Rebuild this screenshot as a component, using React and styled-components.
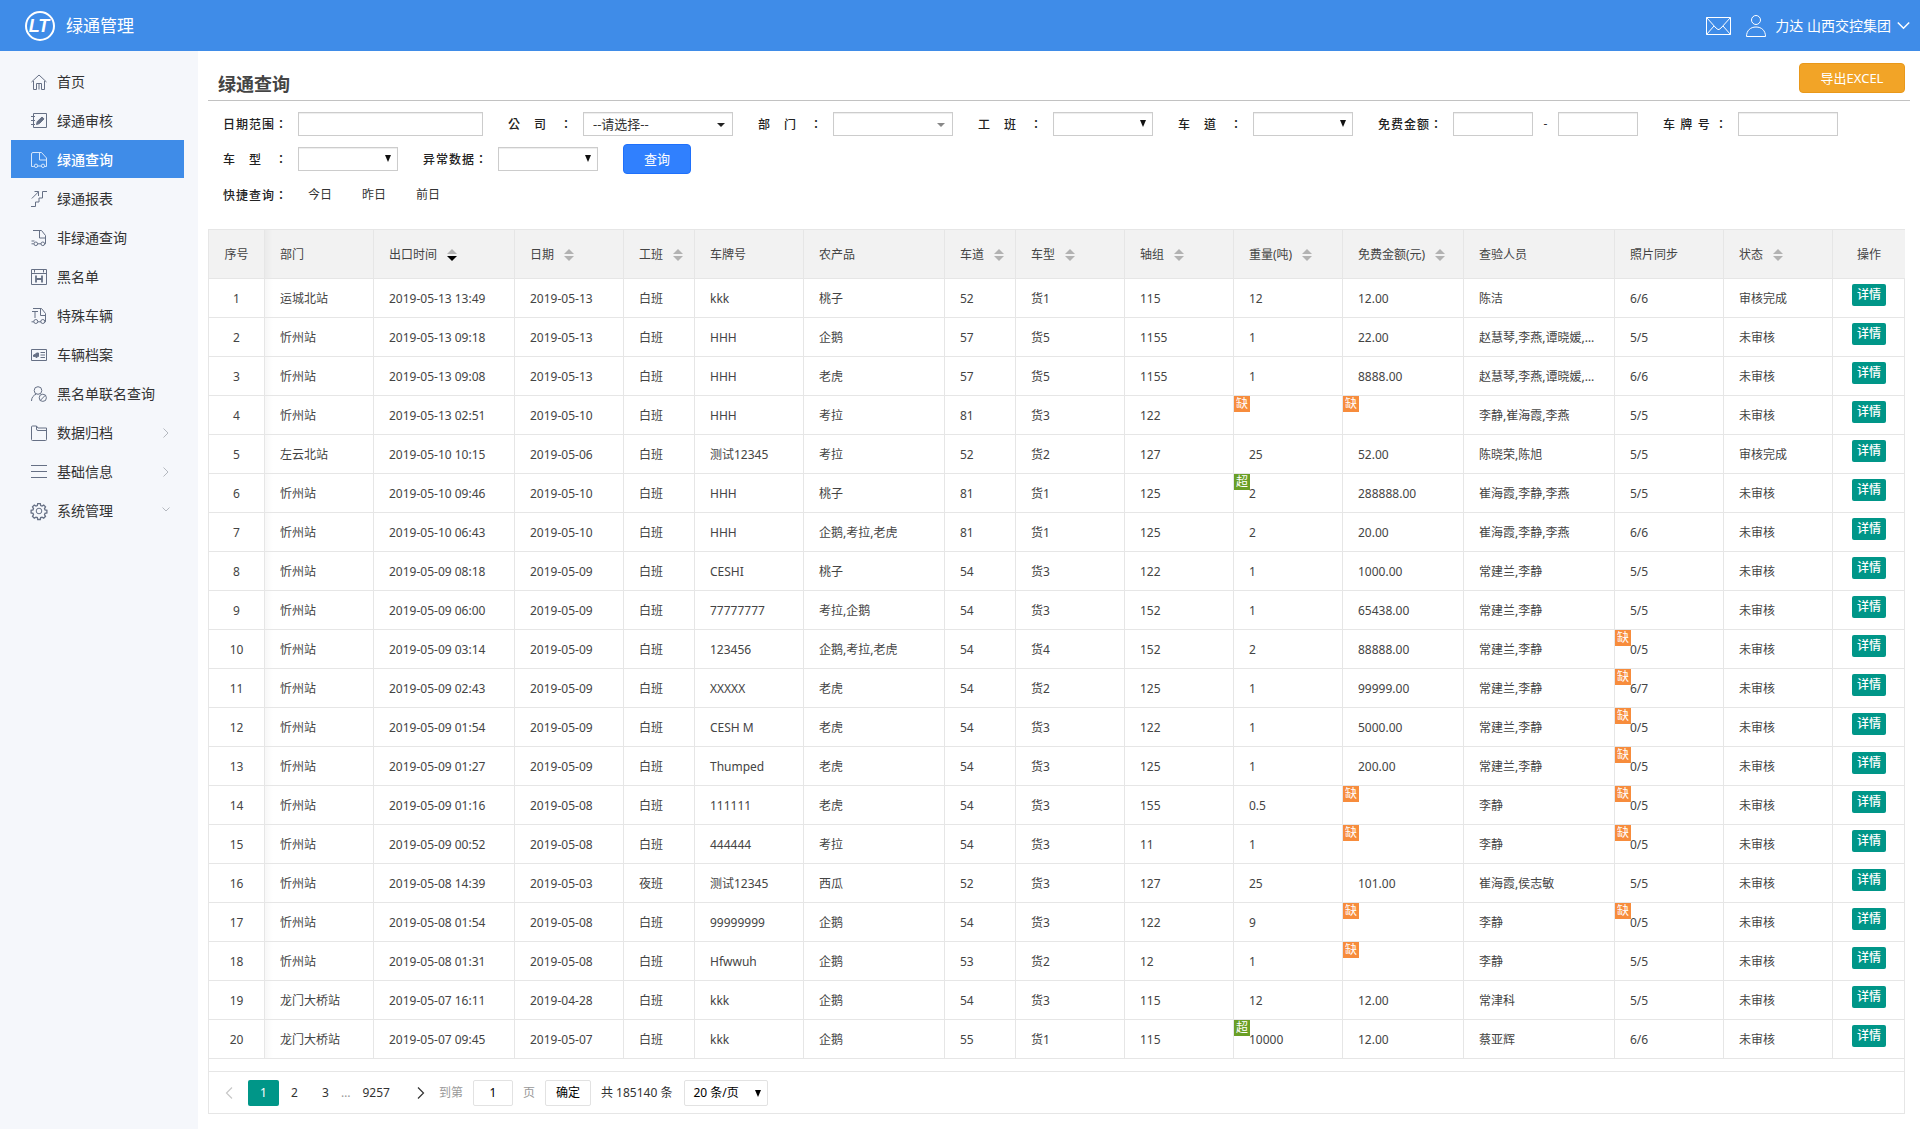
import React, { useState } from 'react';
import styled, { createGlobalStyle, css } from 'styled-components';

const GlobalStyle = createGlobalStyle`
  * {
    box-sizing: border-box;
  }

  body {
    margin: 0;
    background: #fff;
    color: #333;
    font-family: 'Noto Sans', 'Noto Sans CJK SC', sans-serif;
    font-size: 12px;
    line-height: 24px;
  }

  button,
  input,
  select {
    font: inherit;
    color: inherit;
  }
`;

const Page = styled.div`
  display: flex;
  flex-direction: column;
  min-height: 100vh;
`;

const Header = styled.header`
  display: flex;
  align-items: center;
  justify-content: space-between;
  height: 51px;
  padding: 0 10px 0 24px;
  background: #3f8ce8;
  color: #fff;
`;

const Brand = styled.div`
  display: flex;
  align-items: center;
  gap: 10px;
  font-size: 17px;
`;

const UserArea = styled.div`
  display: flex;
  align-items: center;
  font-size: 14px;
`;

const IconButton = styled.button`
  display: flex;
  padding: 0;
  margin-right: 15px;
  border: none;
  background: transparent;
  cursor: pointer;
`;

const UserMenu = styled.button`
  display: flex;
  align-items: center;
  gap: 6px;
  padding: 0;
  border: none;
  background: transparent;
  cursor: pointer;

  svg:first-child {
    margin-right: 3px;
  }
`;

const Body = styled.div`
  display: flex;
  flex: 1;
`;

const Sidebar = styled.nav`
  flex: 0 0 198px;
  padding: 11px 14px 0 11px;
  background: #f5f7fb;
`;

const MenuItem = styled.a`
  display: flex;
  align-items: center;
  height: 38px;
  margin-bottom: 1px;
  padding: 2px 14px 0 20px;
  font-size: 14px;
  color: #333;
  text-decoration: none;

  > svg {
    margin-right: 10px;
    color: #667085;
  }

  ${({ $active }) =>
    $active &&
    css`
      background: #3f8ce8;
      color: #fff;
      font-weight: 500;

      > svg {
        color: #d5e6fb;
      }
    `}
`;

const MenuArrow = styled.span`
  display: flex;
  margin-left: auto;
  color: #b4b8bf;
`;

const Main = styled.main`
  flex: 1;
  min-width: 0;
  padding: 0 10px 0 10px;
`;

const TitleBar = styled.div`
  display: flex;
  align-items: center;
  justify-content: space-between;
  height: 50px;
  padding: 16px 5px 0 10px;
  border-bottom: 1px solid #c2c2c2;
`;

const Title = styled.h1`
  margin: 0;
  font-size: 18px;
  font-weight: bold;
  color: #444;
`;

const ExportButton = styled.button`
  width: 106px;
  height: 30px;
  margin-bottom: 12px;
  padding: 0;
  border: 1px solid #e9981a;
  border-radius: 4px;
  background: #f2a427;
  color: #fff;
  font-size: 13px;
  cursor: pointer;
`;

const Filters = styled.form`
  display: flex;
  flex-direction: column;
  gap: 1px;
  padding: 6px 0 0 15px;
`;

const FilterRow = styled.div`
  display: flex;
  flex-wrap: wrap;
  align-items: center;
  column-gap: 25px;
  min-height: 34px;

  &:last-child {
    min-height: 36px;
  }
`;

const Field = styled.div`
  display: flex;
  align-items: center;
`;

const FieldLabel = styled.label`
  width: 64px;
  margin-right: 11px;
  font-family: 'Noto Sans CJK TC', 'Noto Sans CJK SC', sans-serif;
  font-weight: 500;
  color: #222;
  text-align: justify;
  text-align-last: justify;
`;

const control = css`
  width: ${({ $width }) => $width}px;
  height: 24px;
  border: 1px solid #ccc;
  border-radius: 0;
  background: #fff;
  box-shadow: inset 0 1px 1px rgba(0, 0, 0, 0.075);
`;

const TextInput = styled.input`
  ${control}
  padding: 0 8px;
`;

const SelectWrap = styled.span`
  position: relative;
  display: flex;
`;

const Select = styled.select`
  ${control}
  padding: 0 9px;
  appearance: none;
  font-size: 13px;
  line-height: 20px;
`;

const SelectArrow = styled.svg`
  position: absolute;
  right: ${({ $flat }) => ($flat ? 8 : 7)}px;
  top: ${({ $flat }) => ($flat ? 11 : 8)}px;
  pointer-events: none;
`;

const Dash = styled.span`
  width: 25px;
  text-align: center;
`;

const SearchButton = styled.button`
  width: 68px;
  height: 30px;
  padding: 0;
  border: 1px solid #1f70fb;
  border-radius: 4px;
  background: #3080fe;
  color: #fff;
  font-size: 13px;
  cursor: pointer;
`;

const QuickLabel = styled(FieldLabel).attrs({ as: 'span' })`
  margin-right: 21px;
`;

const QuickLinks = styled.div`
  display: flex;
  gap: 30px;
`;

const QuickLink = styled.a`
  color: #333;
  text-decoration: none;
`;

const TableBox = styled.section`
  margin: 16px 5px 0 0;
  border: 1px solid #e6e6e6;
`;

const Table = styled.table`
  width: 100%;
  table-layout: fixed;
  border-collapse: separate;
  border-spacing: 0;
  color: #444;
`;

const cell = css`
  padding: 2px 15px 0;
  border-right: 1px solid #e6e6e6;
  border-bottom: 1px solid #e6e6e6;
  overflow: hidden;
  text-align: left;
  white-space: nowrap;

  &:first-child,
  &:last-child {
    padding-left: 0;
    padding-right: 0;
    text-align: center;
  }

  &:last-child {
    border-right: none;
  }

  &:nth-child(2) {
    background-image: linear-gradient(to right, rgba(0, 0, 0, 0.03), transparent 8px);
  }
`;

const HeadCell = styled.th`
  ${cell}
  height: 49px;
  background-color: #f2f2f2;
  font-weight: normal;
`;

const Cell = styled.td`
  ${cell}
  position: relative;
  height: 39px;
  text-overflow: ellipsis;

  &:last-child {
    padding-top: 5px;
    vertical-align: top;
  }
`;

const SortButton = styled.button`
  display: inline-flex;
  align-items: center;
  gap: 10px;
  padding: 0;
  border: none;
  background: transparent;
  vertical-align: middle;
  cursor: pointer;
`;

const Badge = styled.span`
  position: absolute;
  top: 0;
  left: 0;
  width: 16px;
  height: 16px;
  background: ${({ $over }) => ($over ? '#6a9f26' : '#f78c3c')};
  color: #fff;
  line-height: 16px;
  text-align: center;
`;

const DetailButton = styled.button`
  width: 34px;
  height: 22px;
  padding: 0;
  border: none;
  border-radius: 2px;
  background: #009688;
  color: #fff;
  font-weight: 500;
  line-height: 22px;
  vertical-align: top;
  cursor: pointer;
`;

const Pagination = styled.div`
  display: flex;
  align-items: center;
  height: 42px;
  margin-top: 12px;
  padding-left: 4px;
  border-top: 1px solid #e6e6e6;
`;

const PageLink = styled.button`
  display: flex;
  align-items: center;
  justify-content: center;
  min-width: 31px;
  height: 26px;
  padding: 0 12px;
  border: none;
  border-radius: 2px;
  background: ${({ $current }) => ($current ? '#009688' : 'transparent')};
  color: ${({ $current }) => ($current ? '#fff' : '#333')};
  cursor: pointer;

  &:disabled {
    color: #c8c8c8;
  }
`;

const StepLink = styled(PageLink)`
  padding: 0 15px 0 12px;
`;

const NextLink = styled(PageLink)`
  padding: 0 14px 0 15px;
`;

const Muted = styled.span`
  color: #999;
`;

const SkipLabel = styled.label`
  display: flex;
  align-items: center;
  gap: 10px;
  color: #999;
`;

const PageInput = styled.input`
  width: 40px;
  height: 26px;
  padding: 0;
  border: 1px solid #e2e2e2;
  border-radius: 2px;
  color: #000;
  text-align: center;
`;

const ConfirmButton = styled.button`
  width: 46px;
  height: 26px;
  margin: 0 10px;
  padding: 0;
  border: 1px solid #e2e2e2;
  border-radius: 2px;
  background: #fff;
  color: #000;
  cursor: pointer;
`;

const PageSize = styled(SelectWrap)`
  margin-left: 12px;

  svg {
    top: 10px;
  }
`;

const PageSizeSelect = styled.select`
  width: 84px;
  height: 26px;
  padding: 0 8px;
  border: 1px solid #e2e2e2;
  border-radius: 2px;
  background: #fff;
  color: #000;
  appearance: none;
`;

const icons = {
  home: <path d="M.5 8 8 1l7.500 7M2.500 7v8.500h3v-6h5v6h3V7M8 10v5.500" />,
  audit: (
    <>
      <path d="M2.500.5h13v14h-13zM0 3.500h4M0 7.500h4M0 11.500h4" />
      <path d="m5.500 11.500.8-3L11 4l2 1.900-4.600 4.700z" fill="currentColor" />
    </>
  ),
  query: (
    <>
      <path d="M2.800 14.500H.5V2q0-1.500 1.500-1.500h8.500l5 5.500v8.500h-1.700M8.500.5V8h7M6.800 14h3.400" />
      <circle cx="5" cy="13.800" r="1.700" />
      <circle cx="12" cy="13.800" r="1.700" />
    </>
  ),
  report: <path d="M0 15.500h4.500v-4.500H8V7h3.500V.5H16M.8 7.500 7.500.8M3.500.5h4V5" />,
  other: (
    <>
      <path d="M2 .5h8.500l4 5v8.300h-1M8.500.5V8h6M.5 11h3M.5 13.800h2.300M6.800 13.800h3.200" />
      <circle cx="4.800" cy="13.800" r="1.800" />
      <circle cx="11.800" cy="13.800" r="1.800" />
    </>
  ),
  black: (
    <>
      <path d="M.5.5h15v15H.5zM.5 4.500h15M3.500.5v3M12.500.5v3" />
      <path d="M5 6.500v7M11 6.500v7M5 10h6" strokeWidth="1.800" />
    </>
  ),
  special: (
    <>
      <path d="M2 .5h8.500l4 5v8.300h-1M9.500.5v7h5M1 3.500h6M4 3.500V10M.5 13.800h2.300M6.800 13.800h3.200" />
      <circle cx="4.800" cy="13.500" r="2" />
      <circle cx="11.800" cy="13.500" r="2" />
    </>
  ),
  archive: (
    <>
      <path d="M.5 2.500h15v11H.5zM9.500 5.500H14M9.500 8H14M9.500 10.500H14" />
      <path d="M2.500 8 4 7.500 5.500 6h2v3.500H6.500L5.500 11l-1-1.500h-2z" fill="currentColor" />
    </>
  ),
  joint: (
    <>
      <circle cx="7" cy="4.500" r="3.800" />
      <path d="M.5 15c0-3.500 2-5.800 4.700-6.800" />
      <circle cx="11.800" cy="11.800" r="3.600" />
      <path d="m9.400 14.300 4.900-5" />
    </>
  ),
  folder: <path d="M.5 2q0-1 1-1h4l1.500 2h8.500v11.500q0 1-1 1h-13q-1 0-1-1zM5.500 1v3q0 1.500 1.500 1.500h8.500" />,
  list: <path d="M0 1.500h16M0 7.500h16M0 13.500h16" />,
  gear: (
    <>
      <circle cx="8" cy="8" r="2.800" />
      <path
        d="M6.700.7h2.600l.4 1.900 1.300.5 1.700-1 1.800 1.800-1 1.700.5 1.300 1.900.4v2.600l-1.900.4-.5 1.300 1 1.700-1.800 1.800-1.700-1-1.300.5-.4 1.900H6.700l-.4-1.900-1.300-.5-1.700 1-1.800-1.800 1-1.700L2 10.300l-1.900-.4V7.300L2 6.900l.5-1.300-1-1.700 1.800-1.800 1.700 1 1.300-.5z"
        strokeWidth="1.300"
      />
    </>
  ),
};

const MenuIcon = ({ name }) => (
  <svg width="16" height="16" viewBox="0 0 16 16" fill="none" stroke="currentColor" overflow="visible">
    {icons[name]}
  </svg>
);

const Chevron = ({ d, width = 8, height = 10, strokeWidth = 1 }) => (
  <svg width={width} height={height} fill="none" stroke="currentColor" strokeWidth={strokeWidth}>
    <path d={d} />
  </svg>
);

const menu = [
  { icon: 'home', text: '首页' },
  { icon: 'audit', text: '绿通审核' },
  { icon: 'query', text: '绿通查询', active: true },
  { icon: 'report', text: '绿通报表' },
  { icon: 'other', text: '非绿通查询' },
  { icon: 'black', text: '黑名单' },
  { icon: 'special', text: '特殊车辆' },
  { icon: 'archive', text: '车辆档案' },
  { icon: 'joint', text: '黑名单联名查询' },
  { icon: 'folder', text: '数据归档', arrow: 'M1.500.5 6 5 1.500 9.500' },
  { icon: 'list', text: '基础信息', arrow: 'M1.500.5 6 5 1.500 9.500' },
  { icon: 'gear', text: '系统管理', arrow: 'M.5 1.500 4 5l3.500-3.500' },
];

const columns = [
  { title: '序号', width: 56 },
  { title: '部门', width: 109 },
  { title: '出口时间', width: 141, sort: 'desc' },
  { title: '日期', width: 109, sort: 'none' },
  { title: '工班', width: 71, sort: 'none' },
  { title: '车牌号', width: 109 },
  { title: '农产品', width: 141 },
  { title: '车道', width: 71, sort: 'none' },
  { title: '车型', width: 109, sort: 'none' },
  { title: '轴组', width: 109, sort: 'none' },
  { title: '重量(吨)', width: 109, sort: 'none' },
  { title: '免费金额(元)', width: 121, sort: 'none' },
  { title: '查验人员', width: 151 },
  { title: '照片同步', width: 109 },
  { title: '状态', width: 109, sort: 'none' },
  { title: '操作', width: 72 },
];

// a leading "缺" or "超" in a value is shown as a corner badge
const rows = [
  ['运城北站', '2019-05-13 13:49', '2019-05-13', '白班', 'kkk', '桃子', '52', '货1', '115', '12', '12.00', '陈洁', '6/6', '审核完成'],
  ['忻州站', '2019-05-13 09:18', '2019-05-13', '白班', 'HHH', '企鹅', '57', '货5', '1155', '1', '22.00', '赵慧琴,李燕,谭晓媛,李静', '5/5', '未审核'],
  ['忻州站', '2019-05-13 09:08', '2019-05-13', '白班', 'HHH', '老虎', '57', '货5', '1155', '1', '8888.00', '赵慧琴,李燕,谭晓媛,李静', '6/6', '未审核'],
  ['忻州站', '2019-05-13 02:51', '2019-05-10', '白班', 'HHH', '考拉', '81', '货3', '122', '缺', '缺', '李静,崔海霞,李燕', '5/5', '未审核'],
  ['左云北站', '2019-05-10 10:15', '2019-05-06', '白班', '测试12345', '考拉', '52', '货2', '127', '25', '52.00', '陈晓荣,陈旭', '5/5', '审核完成'],
  ['忻州站', '2019-05-10 09:46', '2019-05-10', '白班', 'HHH', '桃子', '81', '货1', '125', '超2', '288888.00', '崔海霞,李静,李燕', '5/5', '未审核'],
  ['忻州站', '2019-05-10 06:43', '2019-05-10', '白班', 'HHH', '企鹅,考拉,老虎', '81', '货1', '125', '2', '20.00', '崔海霞,李静,李燕', '6/6', '未审核'],
  ['忻州站', '2019-05-09 08:18', '2019-05-09', '白班', 'CESHI', '桃子', '54', '货3', '122', '1', '1000.00', '常建兰,李静', '5/5', '未审核'],
  ['忻州站', '2019-05-09 06:00', '2019-05-09', '白班', '77777777', '考拉,企鹅', '54', '货3', '152', '1', '65438.00', '常建兰,李静', '5/5', '未审核'],
  ['忻州站', '2019-05-09 03:14', '2019-05-09', '白班', '123456', '企鹅,考拉,老虎', '54', '货4', '152', '2', '88888.00', '常建兰,李静', '缺0/5', '未审核'],
  ['忻州站', '2019-05-09 02:43', '2019-05-09', '白班', 'XXXXX', '老虎', '54', '货2', '125', '1', '99999.00', '常建兰,李静', '缺6/7', '未审核'],
  ['忻州站', '2019-05-09 01:54', '2019-05-09', '白班', 'CESH M', '老虎', '54', '货3', '122', '1', '5000.00', '常建兰,李静', '缺0/5', '未审核'],
  ['忻州站', '2019-05-09 01:27', '2019-05-09', '白班', 'Thumped', '老虎', '54', '货3', '125', '1', '200.00', '常建兰,李静', '缺0/5', '未审核'],
  ['忻州站', '2019-05-09 01:16', '2019-05-08', '白班', '111111', '老虎', '54', '货3', '155', '0.5', '缺', '李静', '缺0/5', '未审核'],
  ['忻州站', '2019-05-09 00:52', '2019-05-08', '白班', '444444', '考拉', '54', '货3', '11', '1', '缺', '李静', '缺0/5', '未审核'],
  ['忻州站', '2019-05-08 14:39', '2019-05-03', '夜班', '测试12345', '西瓜', '52', '货3', '127', '25', '101.00', '崔海霞,侯志敏', '5/5', '未审核'],
  ['忻州站', '2019-05-08 01:54', '2019-05-08', '白班', '99999999', '企鹅', '54', '货3', '122', '9', '缺', '李静', '缺0/5', '未审核'],
  ['忻州站', '2019-05-08 01:31', '2019-05-08', '白班', 'Hfwwuh', '企鹅', '53', '货2', '12', '1', '缺', '李静', '5/5', '未审核'],
  ['龙门大桥站', '2019-05-07 16:11', '2019-04-28', '白班', 'kkk', '企鹅', '54', '货3', '115', '12', '12.00', '常津科', '5/5', '未审核'],
  ['龙门大桥站', '2019-05-07 09:45', '2019-05-07', '白班', 'kkk', '企鹅', '55', '货1', '115', '超10000', '12.00', '蔡亚辉', '6/6', '未审核'],
];

const SortMark = ({ sort }) => (
  <svg width="10" height="12">
    <path d="M5 0l5 5H0z" fill="#b2b2b2" />
    <path d="M0 7h10l-5 5z" fill={sort === 'desc' ? '#000' : '#b2b2b2'} />
  </svg>
);

const FilterInput = ({ id, label, width }) => (
  <Field>
    <FieldLabel htmlFor={id}>{label}</FieldLabel>
    <TextInput id={id} type="text" $width={width} />
  </Field>
);

const FilterSelect = ({ id, label, width, option = '', arrow }) => (
  <Field>
    <FieldLabel htmlFor={id}>{label}</FieldLabel>
    <SelectWrap>
      <Select id={id} $width={width}>
        <option>{option}</option>
      </Select>
      {arrow ? (
        <SelectArrow $flat width="8" height="4">
          <path d="M0 0h8L4 4z" fill={arrow} />
        </SelectArrow>
      ) : (
        <SelectArrow width="6" height="7">
          <path d="M0 0h6L3 7z" fill="#111" />
        </SelectArrow>
      )}
    </SelectWrap>
  </Field>
);

const DataCell = ({ value }) => {
  const flag = value[0] === '缺' || value[0] === '超' ? value[0] : '';
  return (
    <Cell>
      {flag && <Badge $over={flag === '超'}>{flag}</Badge>}
      {value.slice(flag.length)}
    </Cell>
  );
};

const App = () => {
  const [page, setPage] = useState('1');

  return (
    <Page>
      <GlobalStyle />
      <Header>
        <Brand>
          <svg width="32" height="32" viewBox="0 0 32 32">
            <circle cx="16" cy="16" r="14" fill="none" stroke="#fff" strokeWidth="2" />
            <text x="15" y="22" fill="#fff" fontFamily="Liberation Sans, sans-serif" fontSize="18" fontWeight="bold" fontStyle="italic" textAnchor="middle">
              LT
            </text>
          </svg>
          绿通管理
        </Brand>
        <UserArea>
          <IconButton type="button" aria-label="消息">
            <svg width="25" height="18" fill="none" stroke="#fff">
              <path d="M.5.5h24v17H.5zM.5.5l9.500 10.500 2 1.500h1l2-1.500L24.500.5M.5 17.500 8 9M24.500 17.500 17 9" />
            </svg>
          </IconButton>
          <UserMenu type="button">
            <svg width="20" height="22" fill="none" stroke="#fff">
              <circle cx="10" cy="5" r="4.500" />
              <path d="M.5 21.500c0-6 4-9.500 9.500-9.500s9.500 3.500 9.500 9.500z" />
            </svg>
            力达 山西交控集团
            <Chevron d="M.8 1.500 6.500 7.200l5.700-5.700" width={13} height={9} strokeWidth={1.5} />
          </UserMenu>
        </UserArea>
      </Header>
      <Body>
        <Sidebar>
          {menu.map((item) => (
            <MenuItem key={item.text} href="#" $active={item.active}>
              <MenuIcon name={item.icon} />
              {item.text}
              {item.arrow && (
                <MenuArrow>
                  <Chevron d={item.arrow} />
                </MenuArrow>
              )}
            </MenuItem>
          ))}
        </Sidebar>
        <Main>
          <TitleBar>
            <Title>绿通查询</Title>
            <ExportButton type="button">导出EXCEL</ExportButton>
          </TitleBar>
          <Filters onSubmit={(e) => e.preventDefault()}>
            <FilterRow>
              <FilterInput id="range" label="日期范围：" width={185} />
              <FilterSelect id="company" label="公司：" width={150} option="--请选择--" arrow="#222" />
              <FilterSelect id="dept" label="部门：" width={120} arrow="#888" />
              <FilterSelect id="shift" label="工班：" width={100} />
              <FilterSelect id="lane" label="车道：" width={100} />
              <Field>
                <FieldLabel htmlFor="minFee">免费金额：</FieldLabel>
                <TextInput id="minFee" type="text" $width={80} />
                <Dash>-</Dash>
                <TextInput type="text" aria-label="最高免费金额" $width={80} />
              </Field>
              <FilterInput id="plate" label="车牌号：" width={100} />
            </FilterRow>
            <FilterRow>
              <FilterSelect id="model" label="车型：" width={100} />
              <FilterSelect id="abnormal" label="异常数据：" width={100} />
              <SearchButton type="submit">查询</SearchButton>
            </FilterRow>
            <FilterRow>
              <Field>
                <QuickLabel>快捷查询：</QuickLabel>
                <QuickLinks>
                  <QuickLink href="#">今日</QuickLink>
                  <QuickLink href="#">昨日</QuickLink>
                  <QuickLink href="#">前日</QuickLink>
                </QuickLinks>
              </Field>
            </FilterRow>
          </Filters>
          <TableBox>
            <Table>
              <colgroup>
                {columns.map((column) => (
                  <col key={column.title} width={column.width} />
                ))}
              </colgroup>
              <thead>
                <tr>
                  {columns.map((column) => (
                    <HeadCell key={column.title} scope="col">
                      {column.sort ? (
                        <SortButton type="button">
                          {column.title}
                          <SortMark sort={column.sort} />
                        </SortButton>
                      ) : (
                        column.title
                      )}
                    </HeadCell>
                  ))}
                </tr>
              </thead>
              <tbody>
                {rows.map((row, index) => (
                  <tr key={row[1]}>
                    <Cell>{index + 1}</Cell>
                    {row.map((value, i) => (
                      <DataCell key={columns[i + 1].title} value={value} />
                    ))}
                    <Cell>
                      <DetailButton type="button">详情</DetailButton>
                    </Cell>
                  </tr>
                ))}
              </tbody>
            </Table>
            <Pagination>
              <StepLink type="button" aria-label="上一页" disabled>
                <Chevron d="M7 .5 1.500 6 7 11.500" height={12} strokeWidth={1.2} />
              </StepLink>
              <PageLink type="button" $current>1</PageLink>
              <PageLink type="button">2</PageLink>
              <PageLink type="button">3</PageLink>
              <Muted>…</Muted>
              <PageLink type="button">9257</PageLink>
              <NextLink type="button" aria-label="下一页">
                <Chevron d="M1 .5 6.500 6 1 11.500" height={12} strokeWidth={1.2} />
              </NextLink>
              <SkipLabel>
                到第
                <PageInput type="text" value={page} onChange={(e) => setPage(e.target.value)} />
                页
              </SkipLabel>
              <ConfirmButton type="button">确定</ConfirmButton>
              <span>共 185140 条</span>
              <PageSize>
                <PageSizeSelect aria-label="每页条数">
                  <option>20 条/页</option>
                </PageSizeSelect>
                <SelectArrow width="6" height="7">
                  <path d="M0 0h6L3 7z" fill="#000" />
                </SelectArrow>
              </PageSize>
            </Pagination>
          </TableBox>
        </Main>
      </Body>
    </Page>
  );
};

export default App;
